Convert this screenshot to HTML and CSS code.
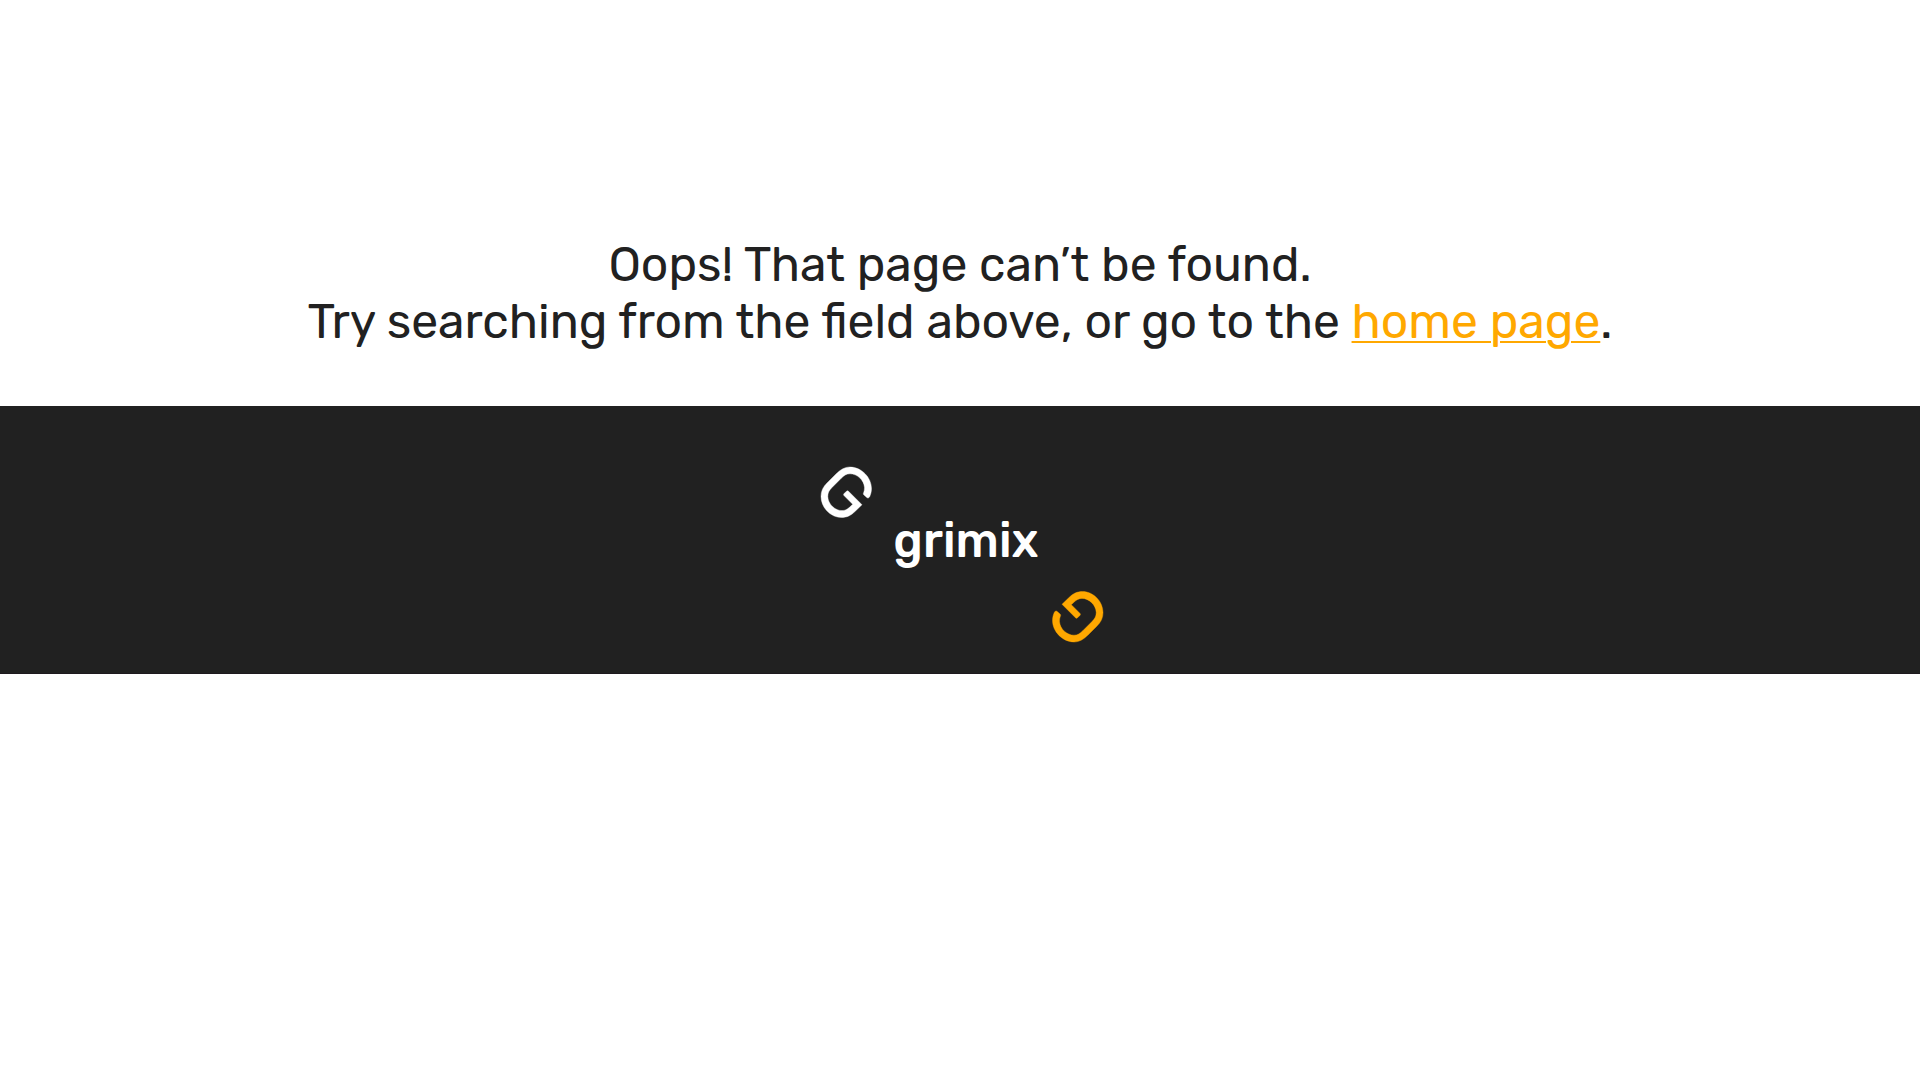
FILE: index.html
```html
<!DOCTYPE html>
<html lang="en">
<head>
  <meta charset="UTF-8" />
  <meta name="viewport" content="width=device-width, initial-scale=1.0" />
  <title>Page not found - grimix</title>
  <link rel="stylesheet" href="styles.css">
</head>
<body>

  <main class="not-found">
    <p>Oops! That page can’t be found.<br>
    Try searching from the field above, or go to the <a href="/">home page</a>.</p>
  </main>

  <footer class="footer">
    <div class="brand">
      <svg class="brand-mark" viewBox="0 0 52 52" aria-hidden="true">
        <path id="mark" d="M28.5 25.2L42 38.7L35.5 45C31 49.5 27 51.5 21.5 51.5C10.5 51.5 1 41.5 1 30.5C1 25 3 21 7 17L16 8C20.5 3.5 25 1 30 1C41.5 1 51.5 11.5 51.5 22.5C51.5 26 50.5 29 49.5 31C48.5 32.3 47.5 32.3 46.5 31.3L44 29C43.2 28.2 43.2 27.5 43.7 26.5C44.3 25 44.5 23.5 44.5 21.5C44 14 37 7.8 30 7.8C26.5 7.8 24 9.5 21 12.5L12 21.5C9 24.5 7.8 27 7.8 30.5C8 38 15 44.6 22 44.6C25 44.6 27.5 43.2 29.8 41L32.7 38.3L24.2 29.8C23.4 29 23.4 28.3 24.1 27.6L26.5 25.2C27.2 24.5 27.8 24.5 28.5 25.2Z" />
      </svg>
      <span class="brand-name">grimix</span>
      <svg class="brand-mark brand-mark-end" viewBox="0 0 52 52" aria-hidden="true">
        <use href="#mark" transform="rotate(180 26 26)" />
      </svg>
    </div>
  </footer>

</body>
</html>
```
FILE: styles.css
```css
body {
  margin: 0;
  font-family: Rubik, Roboto, sans-serif;
  font-size: 48px;
  line-height: 57px;
  color: #212121;
  background: #fff;
}
.not-found {
  padding: 236px 20px 56px;
  text-align: center;
}
.not-found p {
  margin: 0;
}
.not-found a {
  color: #ffa800;
  text-decoration-thickness: 2px;
  text-underline-offset: 3px;
}
.footer {
  padding: 60px 20px 30px;
  background: #212121;
  border-bottom: 1px solid #1e191e;
}
.brand {
  display: flex;
  justify-content: center;
  align-items: center;
  gap: 13px;
  min-height: 177px;
  padding-left: 4px;
}
.brand-mark {
  width: 52px;
  height: 52px;
  align-self: flex-start;
  fill: #fff;
  stroke: #fff;
  stroke-width: 0.4;
}
.brand-mark-end {
  align-self: flex-end;
  fill: #ffa800;
  stroke: #ffa800;
}
.brand-name {
  margin: 0 0 28px 8px;
  color: #fff;
  font-weight: 500;
}
```
